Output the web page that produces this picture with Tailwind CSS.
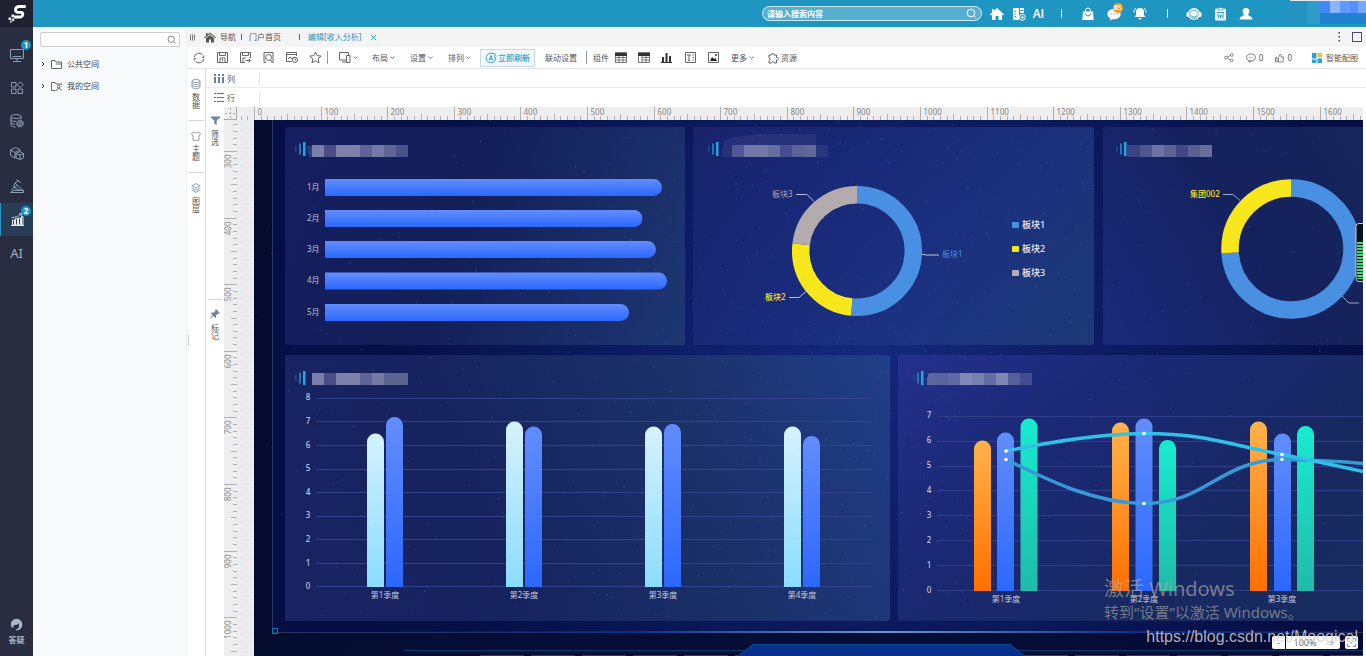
<!DOCTYPE html>
<html lang="zh-CN">
<head>
<meta charset="utf-8">
<meta name="viewport" content="width=device-width, initial-scale=1">
<title>编辑[收入分析]</title>
<script src="https://cdn.jsdelivr.net/npm/@tailwindcss/browser@4"></script>
</head>
<body class="flex h-screen overflow-hidden bg-white font-['Noto_Sans','Noto_Sans_CJK_SC',sans-serif] text-[8px] leading-3 text-[#555]">

<!-- Icon rail -->
<nav class="flex w-[33px] shrink-0 flex-col bg-[#282d40] text-[#8b9db3]" aria-label="主导航">
  <a href="#" class="flex h-[27px] items-center justify-center bg-[#1f2130]" aria-label="首页">
    <svg class="h-[20px] w-[20px]" viewBox="0 0 20 20" fill="none"><path d="M18.700 2.500H12.500C9.800 2.500 8.800 3.600 8.500 5.300 8.200 7.200 9.300 8.300 11.200 8.300H14C15.600 8.300 16 9.300 15.700 10.700 15.400 12.200 14.500 13 12.800 13H7" stroke="#fff" stroke-width="2.800"/><path d="M4.500 10.500h2.700v2.700H4.500zM1.500 13.500h2.500V16H1.500zM4.800 14.500h2.400v2.400H4.800zM3 16.800h1.700v1.700H3z" fill="#e8ebf0"/></svg>
  </a>
  <div class="flex flex-1 flex-col pt-[11px]">
    <button class="relative flex h-[33px] items-center justify-center" aria-label="桌面">
      <svg class="h-[16px] w-[16px]" viewBox="0 0 16 16" fill="none" stroke="currentColor"><path d="M1.500 2.500h13v9h-13zM4 14.500h8M8 11.500v3M3.500 9.500h9"/></svg>
      <span class="absolute top-[2px] right-[2px] flex h-[10px] w-[10px] items-center justify-center rounded-full bg-[#1f95c3] font-bold text-white">1</span>
    </button>
    <button class="flex h-[33px] items-center justify-center" aria-label="应用">
      <svg class="h-[14px] w-[14px]" viewBox="0 0 14 14" fill="none" stroke="currentColor"><path d="M1.500 1.500h4.500v4.500h-4.500zM1.500 8h4.500v4.500h-4.500zM8 8h4.500v4.500H8zM10.300.8l3 3-3 3-3-3z"/></svg>
    </button>
    <button class="flex h-[33px] items-center justify-center" aria-label="数据">
      <svg class="h-[16px] w-[16px]" viewBox="0 0 16 16" fill="none" stroke="currentColor"><ellipse cx="7" cy="3.500" rx="5" ry="2"/><path d="M2 3.500v8.500c0 1 2 2 4.500 2M12 3.500V6M2 6.500c0 1 2 2 5 2M2 9.500c0 1 2 1.800 4 1.800"/><circle cx="11" cy="10.500" r="3.500" stroke-dasharray="1.800 .9"/><circle cx="11" cy="10.500" r="2.600"/><circle cx="11" cy="10.500" r="1"/></svg>
    </button>
    <button class="flex h-[33px] items-center justify-center" aria-label="模型">
      <svg class="h-[15px] w-[16px]" viewBox="0 0 16 15" fill="none" stroke="currentColor"><path d="M6.500 1.500l4.500 2v2M6.500 1.500l-5 2.500v5.500l4.500 2.500M1.500 4l4.500 2.500L11 3.500M6 6.500v6M11 5.500l3.500 2v4.500L11 13.500l-4-1.500V7.500zM7 7.500l4 1.500 3.500-1.500M11 9v4.500"/></svg>
    </button>
    <button class="flex h-[33px] items-center justify-center" aria-label="挖掘">
      <svg class="h-[15px] w-[16px]" viewBox="0 0 16 15" fill="none" stroke="currentColor"><path d="M1.500 13.500h13v-2H4.500zM2.500 11.500l2-3 6 2.500 4 .5M4.500 8.500l4-2 5 4M8.500 6.500L6 4l3.500-2.500L12 4M6 4l-1.500 4M9.500 1.500L7.500 1"/></svg>
    </button>
    <button class="relative flex h-[33px] items-center justify-center border-l border-[#1f95c3] bg-[#293c55] text-[#e6ebf2]" aria-label="分析" aria-current="page">
      <svg class="h-[15px] w-[15px]" viewBox="0 0 15 15" fill="none" stroke="currentColor"><path d="M1 13.500h13"/><path d="M2.500 8h2v5h-2zM5.500 6.500h2V13h-2zM8.500 6h2v7h-2zM11.500 4.500h1.500V13h-1.500z"/><path d="M1.500 5.500c4 0 7-1 9.500-3.500M9 1.500h2.500V4" stroke="#b4c0cf"/></svg>
      <span class="absolute top-[3px] right-[2px] flex h-[10px] w-[10px] items-center justify-center rounded-full bg-[#1f95c3] font-bold text-white">2</span>
    </button>
    <button class="flex h-[33px] items-center justify-center text-[13px] leading-4 text-[#a5b3c4]">AI</button>
  </div>
  <button class="flex flex-col items-center gap-[3px] pb-[10px]">
    <svg class="h-[13px] w-[13px]" viewBox="0 0 13 13"><path d="M6.500.8A5.600 5.600 0 0 0 .8 6.500C.8 8.500 1.500 9.700 3.500 9.900 3.300 8.800 3.400 7.800 4 7c1.500.3 3.500-.2 4.500-1.800.5 1.500.7 2.800.2 4.300-.5 1.200-1.700 1.600-2.700 1.600v1.200c3 .2 4.600-1 5.200-2.600.8-.4 1.200-1.500 1.200-3.200A5.800 5.800 0 0 0 6.500.8z" fill="#a9b6c6"/></svg>
    <span class="font-bold text-[#a9b6c6]">答疑</span>
  </button>
</nav>

<div class="flex min-w-0 flex-1 flex-col">
  <!-- Top bar -->
  <header class="flex h-[27px] shrink-0 items-center justify-end bg-[#1f95c1] text-white">
    <label class="mr-1 flex h-[15px] w-[220px] items-center rounded-full border border-white/70 bg-white/25 px-1">
      <input type="text" placeholder="请输入搜索内容" aria-label="搜索" class="min-w-0 flex-1 bg-transparent font-bold outline-none placeholder:text-white">
      <svg class="h-[11px] w-[11px]" viewBox="0 0 11 11" fill="none" stroke="#fff"><circle cx="5" cy="5" r="3.800"/><path d="M8 8l2 2"/></svg>
    </label>
    <button class="flex w-[22px] justify-center" aria-label="主页"><svg class="h-[14px] w-[14px]" viewBox="0 0 14 14" fill="#fff"><path d="M7 1l7 6.500-1 1L12 7.600V13H8.500V9h-3v4H2V7.600l-1 .9-1-1L2 5.600V2h2v1.800z"/></svg></button>
    <button class="flex w-[22px] justify-center" aria-label="新建"><svg class="h-[14px] w-[14px]" viewBox="0 0 14 14"><path d="M1 1h6v12H1zM8 1h4v5H8z" fill="#fff"/><path d="M2.500 4.500h1.500M2.500 7h1.500M2.500 9.500h1.500M8.500 3.500h3" stroke="#1f95c1"/><circle cx="10.300" cy="10.300" r="3" fill="#1f95c1" stroke="#fff"/><path d="M10.300 8.800v3M8.800 10.300h3" stroke="#fff"/></svg></button>
    <button class="w-[17px] text-center font-['Open_Sans','Noto_Sans',sans-serif] text-[12px] leading-4 font-semibold">AI</button>
    <span class="flex w-[28px] justify-center"><span class="h-[9px] w-px bg-white"></span></span>
    <button class="flex w-[26px] justify-center" aria-label="资源包"><svg class="h-[14px] w-[12px]" viewBox="0 0 12 14"><path d="M1 4.500h10l.7 8.500H.3z" fill="#fff"/><path d="M3.500 5V3.500a2.500 2.500 0 0 1 5 0V5" fill="none" stroke="#fff"/><path d="M3.500 6.500a2.500 2.500 0 0 0 5 0" fill="none" stroke="#1f95c1"/></svg></button>
    <button class="relative flex w-[26px] justify-center" aria-label="消息"><svg class="h-[14px] w-[14px]" viewBox="0 0 14 14"><ellipse cx="7" cy="7" rx="6.700" ry="5.200" fill="#fff"/><path d="M3 10v3.500l4-2z" fill="#fff"/><path d="M3.500 7h1M6.500 7h1M9.500 7h1" stroke="#1f95c1"/></svg><span class="absolute -top-[4px] left-[12px] flex h-[10px] w-[10px] items-center justify-center rounded-full bg-[#f59a0c] text-[7px] font-bold">65</span></button>
    <button class="flex w-[26px] justify-center" aria-label="提醒"><svg class="h-[13px] w-[14px]" viewBox="0 0 14 13"><path d="M7 1a4 4 0 0 1 4 4v3l1.500 2h-11L3 8V5a4 4 0 0 1 4-4zM5.500 11h3a1.500 1.500 0 0 1-3 0z" fill="#fff"/><path d="M1 5.500C1 3.500 1.500 2.300 3 1.200M13 5.500c0-2-.5-3.200-2-4.300" fill="none" stroke="#fff"/></svg></button>
    <span class="flex w-[28px] justify-center"><span class="h-[9px] w-px bg-white"></span></span>
    <button class="flex w-[26px] justify-center" aria-label="客服"><svg class="h-[14px] w-[16px]" viewBox="0 0 16 14"><circle cx="8" cy="7" r="6" fill="#fff"/><rect x="0.500" y="5" width="3" height="5" rx="1.500" fill="#fff"/><rect x="12.500" y="5" width="3" height="5" rx="1.500" fill="#fff"/><circle cx="8" cy="7.300" r="4.200" fill="none" stroke="#1f95c1" stroke-width=".8"/><path d="M5.500 8.500a2.700 2.700 0 0 0 5 0" fill="none" stroke="#1f95c1"/></svg></button>
    <button class="flex w-[26px] justify-center" aria-label="任务"><svg class="h-[14px] w-[13px]" viewBox="0 0 13 14"><rect x="1" y="1.500" width="11" height="12" rx="1.500" fill="#fff"/><rect x="4" y="0.500" width="5" height="2.500" fill="#fff" stroke="#1f95c1" stroke-width=".7"/><path d="M3 5.500h7M4 7v4.500M6.500 7.500v4M9 6v5.500M4 9h5" stroke="#1f95c1" stroke-width=".9"/></svg></button>
    <button class="flex w-[26px] justify-center" aria-label="用户"><svg class="h-[14px] w-[14px]" viewBox="0 0 14 14" fill="#fff"><path d="M7 1a3.300 3.300 0 0 1 3.300 3.500c0 1.500-.6 2.700-1.500 3.300.2 1 4.500 1.200 4.700 4.700H.5c.2-3.500 4.500-3.700 4.700-4.700C4.300 7.200 3.700 6 3.700 4.500A3.300 3.300 0 0 1 7 1z"/></svg></button>
    <svg class="h-[27px] w-[107px] shrink-0" viewBox="0 0 107 27" shape-rendering="crispEdges"><path d="M26 1h22v23H34c-8-3-8-18-8-23z" fill="#2493c1"/><path d="M48 1h13v23H48z" fill="#2f9bc8"/><path d="M61 1h46v23H61z" fill="#2182d2"/><path d="M31 0h76v1H31z" fill="#e3e9ef"/><path d="M61 1h10v12H61z" fill="#4488ff"/><path d="M71 1h10v12H71z" fill="#8ab4ff"/><path d="M81 1h10v12H81z" fill="#6199ff"/><path d="M91 1h16v12H91z" fill="#5590ff"/><path d="M99 1h8v12h-8z" fill="#78a8fb"/></svg>
  </header>

  <div class="flex min-h-0 flex-1">
    <!-- Resource tree -->
    <aside class="w-[154px] shrink-0 border-r border-[#eceef1] bg-[#f8fafc] px-[7px] pt-[5px] text-[#444]">
      <label class="flex h-[15px] w-[140px] items-center rounded-xs border border-[#cfcfcf] bg-white px-[3px]">
        <input type="text" aria-label="查找资源" class="min-w-0 flex-1 outline-none">
        <svg class="h-[9px] w-[9px]" viewBox="0 0 9 9" fill="none" stroke="#777" stroke-width=".9"><circle cx="4.200" cy="4.200" r="3.200"/><path d="M6.500 6.500l2 2"/></svg>
      </label>
      <ul class="mt-[6px]">
        <li><button class="flex h-[22px] items-center gap-[5px]"><svg class="h-[6px] w-[6px]" viewBox="0 0 6 6" fill="none" stroke="#333"><path d="M2 1l2 2-2 2"/></svg><svg class="h-[9px] w-[11px]" viewBox="0 0 11 9" fill="none" stroke="#555" stroke-width=".9"><path d="M.5 8.500v-8h3.500l1 1.500h5.500v6.500zM5 4h5"/></svg><span>公共空间</span></button></li>
        <li><button class="flex h-[22px] items-center gap-[5px]"><svg class="h-[6px] w-[6px]" viewBox="0 0 6 6" fill="none" stroke="#333"><path d="M2 1l2 2-2 2"/></svg><svg class="h-[9px] w-[11px]" viewBox="0 0 11 9" fill="none" stroke="#555" stroke-width=".9"><path d="M4.500 8.500h-4v-8h3.500l1 1.500h5.500v1"/><circle cx="7.800" cy="4.700" r="1.400"/><path d="M5.500 8.700c.2-3 4.300-3 4.700 0"/></svg><span>我的空间</span></button></li>
      </ul>
    </aside>

    <main class="flex min-w-0 flex-1 flex-col">
      <!-- Open tabs -->
      <div class="flex h-5 shrink-0 items-center bg-[#f4f4f4] pr-1 pl-[3px]">
        <svg class="h-[7px] w-[6px]" viewBox="0 0 6 7" stroke="#777"><path d="M.5.500v6M2.500.500v6M4.500.500v6"/></svg>
        <a href="#" class="ml-2 flex items-center gap-1"><svg class="h-[11px] w-[12px]" viewBox="0 0 12 11" fill="#555"><path d="M6 .5l6 5-.7.8L6 2 .7 6.300 0 5.500 2 3.800V1h1.500v1.600zM6 3l4 3.300V10.500H7V7.500H5v3H2V6.300z"/></svg><span>导航</span></a>
        <span class="ml-[5px] h-[6px] w-px bg-[#666]"></span>
        <a href="#" class="ml-[7px]">门户首页</a>
        <span class="ml-[18px] h-[6px] w-px bg-[#666]"></span>
        <a href="#" class="ml-[8px] text-[#2d8fbd]" aria-current="page">编辑[收入分析]</a>
        <button class="ml-[9px]" aria-label="关闭"><svg class="h-[7px] w-[7px]" viewBox="0 0 7 7" stroke="#3c9cc9"><path d="M1 1l5 5M6 1L1 6"/></svg></button>
        <button class="ml-auto" aria-label="更多"><svg class="h-[10px] w-[4px]" viewBox="0 0 4 10" fill="#444"><path d="M1.500 0h1.500v1.500h-1.500zM1.500 4h1.500v1.500h-1.500zM1.500 8h1.500v1.500h-1.500z"/></svg></button>
        <button class="ml-[11px] h-[10px] w-[10px] border border-[#4a4a70]" aria-label="最大化"></button>
      </div>

      <!-- Toolbar -->
      <div class="flex h-[22px] shrink-0 items-center border-b border-[#e4e4e6] pr-2">
        <button class="flex w-[23px] justify-center" aria-label="刷新"><svg class="h-[12px] w-[12px]" viewBox="0 0 12 12" fill="none" stroke="#666"><path d="M1.200 5A4.900 4.900 0 0 1 9.500 2.600M10.800 7A4.900 4.900 0 0 1 2.500 9.400M10.800 3.500v2H9M1.200 8.500v-2H3"/></svg></button>
        <button class="flex w-[24px] justify-center" aria-label="保存"><svg class="h-[11px] w-[11px]" viewBox="0 0 11 11" fill="none" stroke="#666"><path d="M.5.500h10v10H.500zM2.500.500v3h6v-3M3 10.500V6h5v4.500M5.500 7v2"/></svg></button>
        <button class="flex w-[23px] justify-center" aria-label="另存"><svg class="h-[11px] w-[11px]" viewBox="0 0 11 11" fill="none" stroke="#666"><path d="M5 10.500H.5V.5h10V6M2.500.500v3h6v-3M3 10V6h3M5.500 8.500h5M8.500 6.500l2 2-2 2"/></svg></button>
        <button class="flex w-[23px] justify-center" aria-label="预览"><svg class="h-[11px] w-[11px]" viewBox="0 0 11 11" fill="none" stroke="#666"><path d="M3 10.500H1V.5h9v10H8.500"/><circle cx="5.500" cy="5.500" r="3"/><path d="M7.500 8l2 2.500"/></svg></button>
        <button class="flex w-[24px] justify-center" aria-label="定时"><svg class="h-[11px] w-[12px]" viewBox="0 0 12 11" fill="none" stroke="#666"><path d="M6 9.500H.5v-9h10V4M.5 2.500h10M2 7l2-2 2 2 1.500-2"/><circle cx="9" cy="7.800" r="2.600"/><path d="M9 6.500V8h1.200"/></svg></button>
        <button class="flex w-[23px] justify-center" aria-label="收藏"><svg class="h-[13px] w-[13px]" viewBox="0 0 13 13" fill="none" stroke="#666"><path d="M6.500 1l1.700 3.600 4 .5-3 2.700.8 4-3.500-2-3.500 2 .8-4-3-2.700 4-.5z"/></svg></button>
        <span class="h-[13px] w-px bg-[#999]"></span>
        <button class="ml-[11px] flex items-center gap-[2px]" aria-label="设备"><svg class="h-[11px] w-[12px]" viewBox="0 0 12 11" fill="none" stroke="#666"><path d="M7 8H.5V.5h9V3M3 10h4M7.500 3.500h3.500v7H7.500z"/></svg><svg class="h-[5px] w-[5px]" viewBox="0 0 5 5" fill="none" stroke="#777" stroke-width=".9"><path d="M.5 1.500l2 2 2-2"/></svg></button>
        <button class="ml-[14px] flex items-center gap-[2px]">布局<svg class="h-[5px] w-[5px]" viewBox="0 0 5 5" fill="none" stroke="#777" stroke-width=".9"><path d="M.5 1.500l2 2 2-2"/></svg></button>
        <button class="ml-[15px] flex items-center gap-[2px]">设置<svg class="h-[5px] w-[5px]" viewBox="0 0 5 5" fill="none" stroke="#777" stroke-width=".9"><path d="M.5 1.500l2 2 2-2"/></svg></button>
        <button class="ml-[15px] flex items-center gap-[2px]">排列<svg class="h-[5px] w-[5px]" viewBox="0 0 5 5" fill="none" stroke="#777" stroke-width=".9"><path d="M.5 1.500l2 2 2-2"/></svg></button>
        <button class="ml-[9px] flex h-[18px] w-[55px] items-center justify-center gap-px border border-[#c9d6ec] bg-[#f2f7fc] font-medium text-[#2ba3cf]"><svg class="h-[12px] w-[12px]" viewBox="0 0 12 12" fill="none" stroke="currentColor"><path d="M8.500 1.800A4.800 4.800 0 1 0 10.700 5M8 1l2.500 1.500L9 5M4 8.500l2-5 2 5M4.700 7h2.600"/></svg>立即刷新</button>
        <button class="ml-[10px]">联动设置</button>
        <span class="ml-[9px] h-[13px] w-px bg-[#999]"></span>
        <span class="ml-[6px]">组件</span>
        <button class="flex w-[23px] justify-center" aria-label="表格"><svg class="h-[11px] w-[12px]" viewBox="0 0 12 11" fill="none" stroke="#777"><path d="M.5 1h11v9.500H.5zM.5 5.500h11M.5 8h11M4 3v7.500M8 3v7.500"/><path d="M0 .5h12v3.500H0z" fill="#333" stroke="none"/></svg></button>
        <button class="flex w-[23px] justify-center" aria-label="交叉表"><svg class="h-[11px] w-[12px]" viewBox="0 0 12 11" fill="none" stroke="#777"><path d="M.5 1h11v9.500H.5zM4 5.500h7.500M4 8h7.500M4 3v7.500M8 3v7.500"/><path d="M0 .5h12v3.500H0z" fill="#333" stroke="none"/></svg></button>
        <button class="flex w-[23px] justify-center" aria-label="图表"><svg class="h-[10px] w-[11px]" viewBox="0 0 11 10" fill="#333"><path d="M1 4h2v5H1zM4.500 0h2v9h-2zM8 3h2v6H8zM0 9h11v1H0z"/></svg></button>
        <button class="flex w-[24px] justify-center" aria-label="文本"><svg class="h-[11px] w-[11px]" viewBox="0 0 11 11" fill="none" stroke="#666"><path d="M.5.500h10v10H.500zM2 3h4M4 3v5.500M3 8.500h2M7.500 3h1.500M7.500 5.500h1.500M7.500 8h1.500"/></svg></button>
        <button class="flex w-[23px] justify-center" aria-label="图片"><svg class="h-[11px] w-[11px]" viewBox="0 0 11 11" fill="none" stroke="#666"><path d="M.5.500h10v10H.500z"/><path d="M2 9l2-4 2 2 1.500-1L9 9z" fill="#222" stroke="none"/><circle cx="8" cy="3" r="1" fill="#333" stroke="none"/></svg></button>
        <button class="ml-[6px] flex items-center gap-[2px]">更多<svg class="h-[5px] w-[5px]" viewBox="0 0 5 5" fill="none" stroke="#777" stroke-width=".9"><path d="M.5 1.500l2 2 2-2"/></svg></button>
        <button class="ml-[14px] flex items-center gap-px"><svg class="h-[12px] w-[12px]" viewBox="0 0 12 12" fill="none" stroke="#666"><path d="M1 3h2.500C3 1 6.500 1 6 3h2.500v2.500c2.500-.5 2.500 3 0 2.500v3H6c0-2-2.500-2-2.500 0H1V8.500c1.500 0 1.500-2.500 0-2.500z"/></svg>资源</button>
        <button class="ml-auto" aria-label="分享"><svg class="h-[11px] w-[10px]" viewBox="0 0 10 11" fill="none" stroke="#777" stroke-width=".9"><circle cx="2" cy="5.500" r="1.400"/><circle cx="7.800" cy="3" r="1.400"/><circle cx="7.500" cy="8.500" r="1.400"/><path d="M3.300 5l3.200-1.500M3.300 6l3 1.800"/></svg></button>
        <button class="ml-[12px] flex items-center gap-[3px]" aria-label="评论"><svg class="h-[10px] w-[10px]" viewBox="0 0 10 10" fill="none" stroke="#777" stroke-width=".9"><ellipse cx="5" cy="4.500" rx="4.400" ry="3.500"/><path d="M3 7.500v2l2-1.500M2.800 4.500h.8M4.600 4.500h.8M6.400 4.500h.8"/></svg>0</button>
        <button class="ml-[12px] flex items-center gap-[3px]" aria-label="点赞"><svg class="h-[10px] w-[9px]" viewBox="0 0 9 10" fill="none" stroke="#777" stroke-width=".9"><path d="M.5 4.500h1.500v4.500H.500zM3.500 9V4.500L5 1.500c1-.5 1.500.5 1 2.500h2.500L8 9z"/></svg>0</button>
        <button class="ml-[20px] flex items-center gap-1"><svg class="h-[10px] w-[10px]" viewBox="0 0 10 10"><path d="M0 0h4.500v5.500H0zM0 6.500h4.500V10H0zM5.500 5.500H10V10H5.500z" fill="#2aa4d2"/><path d="M5.500 0H10v4.500H5.500z" fill="#f5bd33"/></svg>智能配图</button>
      </div>

      <div class="flex min-h-0 flex-1">
        <!-- Vertical panel tabs -->
        <div class="flex w-[19px] shrink-0 flex-col items-center border-r border-[#dcdde2]">
          <button class="flex h-[51px] flex-col items-center pt-[10px]"><svg class="h-[10px] w-[10px]" viewBox="0 0 10 10" fill="none" stroke="#8594a8" stroke-width=".9"><ellipse cx="5" cy="2" rx="4" ry="1.500"/><path d="M1 2v6c0 2 8 2 8 0V2M1 4c0 2 8 2 8 0M1 6c0 2 8 2 8 0"/></svg><span class="mt-[4px] w-2 leading-[8px]">数据</span></button>
          <span class="h-px w-[15px] bg-[#cfd3da]"></span>
          <button class="flex h-[51px] flex-col items-center pt-[10px]"><svg class="h-[10px] w-[10px]" viewBox="0 0 10 10" fill="none" stroke="#8594a8" stroke-width=".9"><path d="M3.200.8c.5 1.500 3 1.500 3.600 0L9.500 2.500l-1 2H8v4.800H2V4.500h-.5l-1-2z"/></svg><span class="mt-[4px] w-2 leading-[8px]">主题</span></button>
          <span class="h-px w-[15px] bg-[#cfd3da]"></span>
          <button class="flex h-[51px] flex-col items-center pt-[10px]"><svg class="h-[10px] w-[10px]" viewBox="0 0 10 10" fill="none" stroke="#8594a8" stroke-width=".9"><path d="M5 .6l4.300 2.200L5 5 .7 2.800zM.7 5L5 7.200 9.300 5M.7 7L5 9.300 9.300 7"/></svg><span class="mt-[4px] w-2 leading-[8px]">图层</span></button>
          <span class="mt-[111px] ml-px h-[11px] w-px self-start bg-[#ccc]"></span>
        </div>

        <div class="flex min-w-0 flex-1 flex-col">
          <!-- Column and row shelves -->
          <div class="flex h-[19px] shrink-0 items-center border-b border-[#ececee] pt-px pl-2">
            <svg class="h-[9px] w-[10px]" viewBox="0 0 10 9" fill="#5f7089"><path d="M0 0h2v2H0zM4 0h2v2H4zM8 0h2v2H8zM0 3h2v6H0zM4 3h2v6H4zM8 3h2v6H8z" opacity=".9"/></svg>
            <span class="ml-[3px] w-[32px]">列</span><span class="h-[14px] w-px bg-[#e8e8e8]"></span>
          </div>
          <div class="flex h-[19px] shrink-0 items-center pl-2">
            <svg class="h-[9px] w-[10px]" viewBox="0 0 10 9" fill="#5f7089"><path d="M0 0h2v1H0zM0 4h2v1H0zM0 8h2v1H0zM3 0h7v1H3zM3 4h7v1H3zM3 8h7v1H3z"/></svg>
            <span class="ml-[3px] w-[32px]">行</span><span class="h-[14px] w-px bg-[#e8e8e8]"></span>
          </div>

          <div class="flex min-h-0 flex-1">
            <!-- Filters and marks -->
            <div class="flex w-[18px] shrink-0 flex-col items-center">
              <button class="flex h-[192px] flex-col items-center pt-[9px]"><svg class="h-[9px] w-[9px]" viewBox="0 0 9 9" fill="#74849b"><path d="M0 .5h9v1.300L5.700 4.500V9L3.300 7.800V4.500L0 1.800z"/></svg><span class="mt-[5px] w-2 leading-[8px]">筛选</span></button>
              <span class="h-px w-[14px] bg-[#cfd3da]"></span>
              <button class="flex flex-col items-center pt-[9px]"><svg class="h-[10px] w-[10px]" viewBox="0 0 10 10"><path d="M6 0l4 4-1 .8-.8-.3L6 6.500l.2 1.700-1 .8-2-2L.5 9.500 0 9l2.700-2.700-2-2 .8-.8 1.800.2L5.500 1.800 5.200.8z" fill="#74849b"/></svg><span class="mt-[5px] w-2 leading-[8px]">标记</span></button>
            </div>

            <div class="flex min-w-0 flex-1 flex-col pr-[3px]">
              <div class="flex h-[13px] shrink-0 bg-[#eeeeee]">
                <svg class="h-[13px] w-[13px] shrink-0" viewBox="0 0 13 13" fill="none" stroke="#aaa"><path d="M13 12.500H0M12.500 0v13"/><path d="M6.500 1v10M1 6.500h10" stroke-dasharray="2 2"/></svg>
                <svg id="ruler-x" class="h-[13px] min-w-0 flex-1" stroke="#b0b0b0" font-size="8"></svg>
              </div>
              <div class="flex min-h-0 flex-1">
                <svg id="ruler-y" class="h-full w-[13px] shrink-0 bg-[#eeeeee]" stroke="#b0b0b0" font-size="8"></svg>
                <div class="w-[17px] shrink-0 bg-[#ebecf0] bg-[radial-gradient(circle,#dfe1e8_1px,transparent_1px)] bg-[size:10px_7px]"></div>

                <!-- Dashboard stage -->
                <section class="relative min-w-0 flex-1 overflow-hidden bg-[linear-gradient(100deg,#040b2d,#050e36_30%,#050b34)]" aria-label="收入分析">
                  <div class="absolute top-0 right-0 left-[18px] h-[513px] border-b border-l border-[#26345f] bg-[radial-gradient(circle_at_55%_45%,#14297d,#0d1c62_35%,#050f45_75%)]"></div>
                  <div class="absolute top-[511px] left-[130px] h-[2px] w-[1000px] bg-[linear-gradient(90deg,transparent,#0b2f8c_25%,#6f96cc_50%,#0b2f8c_75%,transparent)]"></div>
                  <svg class="absolute top-[522px] left-0 h-[14px] w-[1240px]" viewBox="0 0 1240 14" fill="none"><path d="M150 8.500h340M765 8.500h345" stroke="#0c3c68"/><path d="M226 13.500h260M770 13.500h350" stroke="#0b4a7c" stroke-dasharray="44 7"/><path d="M484 14l15-11.500h257l15 11.500" fill="#07308c" stroke="#0e4f99"/></svg>
                  <svg class="stars absolute inset-0 h-full w-full opacity-30" fill="#5c86d6"></svg>
                  <span class="absolute top-[508px] left-[18px] h-[6px] w-[6px] border border-[#0777b8]"></span>

                  <div class="relative flex flex-col gap-[10px] pt-[7px] pl-[31px]">
                    <div class="flex gap-2">
                      <!-- Monthly bars -->
                      <article class="h-[218px] w-[400px] shrink-0 rounded-xs bg-[linear-gradient(110deg,#171f62f2,#15215bd9_45%,#1f3a74e6)]">
                        <svg class="h-full w-full" viewBox="285 127 400 218" font-size="8" fill="#b9c0da">
                          <defs>
                            <linearGradient id="blue" x2="0" y2="1"><stop stop-color="#628dfb"/><stop offset="1" stop-color="#2c68ff"/></linearGradient>
                            <linearGradient id="ice" x2="0" y2="1"><stop stop-color="#d6f2ff"/><stop offset="1" stop-color="#8adcfc"/></linearGradient>
                            <linearGradient id="orange" x2="0" y2="1"><stop stop-color="#ffb34a"/><stop offset="1" stop-color="#ff7000"/></linearGradient>
                            <linearGradient id="green" x2="0" y2="1"><stop stop-color="#18ebcf"/><stop offset="1" stop-color="#1fbca8"/></linearGradient>
                            <g id="mark"><path d="M0 5h1.500v6H0z" fill="#1d4b8a"/><path d="M4 2.500h2v11H4z" fill="#1f78b4"/><path d="M8 1h2.500v14H8z" fill="#28a3dd"/></g>
                          </defs>
                          <use href="#mark" x="295" y="141"/>
                          <g shape-rendering="crispEdges"><path d="M307 146h5v11h-3z" fill="#1f4480"/><path d="M312 145h12v12h-12z" fill="#7a7da8"/><path d="M324 145h12v12h-12z" fill="#494f85"/><path d="M336 145h24v12h-24z" fill="#7d80aa"/><path d="M360 145h12v12h-12z" fill="#5d6496"/><path d="M372 145h12v12h-12z" fill="#757aa5"/><path d="M384 145h12v12h-12z" fill="#5f6696"/><path d="M396 145h12v12h-12z" fill="#4b5288"/></g>
                          <g text-anchor="end"><text x="319.500" y="190">1月</text><text x="319.500" y="221">2月</text><text x="319.500" y="252">3月</text><text x="319.500" y="283">4月</text><text x="319.500" y="315">5月</text></g>
                          <g fill="url(#blue)"><path d="M325 179h328.500a8.500 8.500 0 0 1 0 17H325z"/><path d="M325 210h309a8.500 8.500 0 0 1 0 17H325z"/><path d="M325 241h322.500a8.500 8.500 0 0 1 0 17H325z"/><path d="M325 272.500h333.500a8.500 8.500 0 0 1 0 17H325z"/><path d="M325 304h295.500a8.500 8.500 0 0 1 0 17H325z"/></g>
                        </svg>
                      </article>
                      <!-- Sector donut -->
                      <article class="h-[218px] w-[401px] shrink-0 rounded-xs bg-[linear-gradient(125deg,#1b246ed9,#1a2c7ccc_35%,#1e3684cc_65%,#20407acc)]">
                        <svg class="h-full w-full" viewBox="693 127 401 218" font-size="8">
                          <use href="#mark" x="708" y="141"/>
                          <path d="M722 157c0-12 2-20 14-20l20-3h60v11h5v12z" fill="#26317a"/>
                          <g shape-rendering="crispEdges"><path d="M732 145h12v12h-12z" fill="#4f5894"/><path d="M744 145h24v12h-24z" fill="#7279a8"/><path d="M768 145h12v12h-12z" fill="#666e9f"/><path d="M780 145h12v12h-12z" fill="#454f8d"/><path d="M792 145h12v12h-12z" fill="#5a6399"/><path d="M804 145h12v12h-12z" fill="#5f689c"/><path d="M816 145h12v12h-12z" fill="#28367d"/></g>
                          <g fill="none" stroke-width="17.500" transform="rotate(-90 857 251)"><circle cx="857" cy="251" r="56.300" pathLength="360" stroke="#4a90e2" stroke-dasharray="185.500 360"/><circle cx="857" cy="251" r="56.300" pathLength="360" stroke="#f8e71c" stroke-dasharray="91.500 360" stroke-dashoffset="-185.500"/><circle cx="857" cy="251" r="56.300" pathLength="360" stroke="#b3abad" stroke-dasharray="83 360" stroke-dashoffset="-277"/></g>
                          <path d="M796 194.500h11l7 7M789 297.500h10l7-6M922 254.500l5 .5h12" fill="none" stroke="#b8c4e0"/>
                          <text x="772" y="197" fill="#b3abad">板块3</text><text x="765" y="300" fill="#f8e71c" font-weight="500">板块2</text><text x="942" y="257" fill="#4a90e2">板块1</text>
                          <g font-size="9" fill="#eef1fa" font-weight="500"><rect x="1012" y="222" width="7" height="6" rx="1" fill="#4a90e2"/><text x="1022" y="228">板块1</text><rect x="1012" y="246" width="7" height="6" rx="1" fill="#f8e71c"/><text x="1022" y="252">板块2</text><rect x="1012" y="270" width="7" height="6" rx="1" fill="#b3abad"/><text x="1022" y="276">板块3</text></g>
                        </svg>
                      </article>
                      <!-- Group donut -->
                      <article class="ml-px h-[218px] w-[400px] shrink-0 rounded-xs bg-[linear-gradient(60deg,#1c2c80d9,#17235fe6_40%,#182b5ce6)]">
                        <svg class="h-full w-full" viewBox="1103 127 400 218" font-size="8">
                          <use href="#mark" x="1116" y="141"/>
                          <g shape-rendering="crispEdges"><path d="M1127 145h13v12h-13z" fill="#3a4484"/><path d="M1140 145h12v12h-12z" fill="#4d5790"/><path d="M1152 145h12v12h-12z" fill="#6c73a5"/><path d="M1164 145h12v12h-12z" fill="#5c6495"/><path d="M1176 145h12v12h-12z" fill="#404986"/><path d="M1188 145h12v12h-12z" fill="#596191"/><path d="M1200 145h12v12h-12z" fill="#686f9b"/></g>
                          <g fill="none" stroke-width="17.500" transform="rotate(-90 1291 249)"><circle cx="1291" cy="249" r="61" pathLength="360" stroke="#4a90e2" stroke-dasharray="266.300 360"/><circle cx="1291" cy="249" r="61" pathLength="360" stroke="#f8e71c" stroke-dasharray="93.700 360" stroke-dashoffset="-266.300"/></g>
                          <path d="M1223 194.500h10l7 6M1342 296l7 7h10" fill="none" stroke="#9aa8c8"/>
                          <text x="1190" y="197" fill="#f8e71c" font-weight="500">集团002</text>
                          <rect x="1356" y="223.500" width="20" height="58" rx="3" fill="#06101f" stroke="#b9cbe8"/>
                          <path d="M1360 242v37" stroke="#3be06b" stroke-width="6" stroke-dasharray="2 1"/>
                        </svg>
                      </article>
                    </div>

                    <div class="flex gap-2">
                      <!-- Quarterly bars -->
                      <article class="h-[266px] w-[605px] shrink-0 rounded-xs bg-[linear-gradient(70deg,#1a2464f2,#182561e6_35%,#1c3268e6_65%,#224189d9)]">
                        <svg class="h-full w-full" viewBox="285 355 605 266" font-size="8" fill="#c3c9df" text-anchor="middle">
                          <use href="#mark" x="295" y="370"/>
                          <g shape-rendering="crispEdges"><path d="M312 373h12v12h-12z" fill="#7a7da8"/><path d="M324 373h12v12h-12z" fill="#494f85"/><path d="M336 373h24v12h-24z" fill="#7d80aa"/><path d="M360 373h12v12h-12z" fill="#5d6496"/><path d="M372 373h12v12h-12z" fill="#757aa5"/><path d="M384 373h24v12h-24z" fill="#5a628f"/></g>
                          <path d="M316 398.500h556M316 421.500h556M316 445.500h556M316 469.500h556M316 492.500h556M316 516.500h556M316 539.500h556M316 563.500h556M316 586.500h556" stroke="#33428c"/>
                          <g font-weight="500"><text x="308" y="400">8</text><text x="308" y="424">7</text><text x="308" y="448">6</text><text x="308" y="471">5</text><text x="308" y="495">4</text><text x="308" y="518">3</text><text x="308" y="542">2</text><text x="308" y="566">1</text><text x="308" y="589">0</text></g>
                          <g fill="url(#ice)"><path d="M367 587V442a8.500 8.500 0 0 1 17 0V587z"/><path d="M506 587V430a8.500 8.500 0 0 1 17 0V587z"/><path d="M645 587V435a8.500 8.500 0 0 1 17 0V587z"/><path d="M784 587V435a8.500 8.500 0 0 1 17 0V587z"/></g>
                          <g fill="url(#blue)"><path d="M386 587V425.500a8.500 8.500 0 0 1 17 0V587z"/><path d="M525 587V435a8.500 8.500 0 0 1 17 0V587z"/><path d="M664 587V432.500a8.500 8.500 0 0 1 17 0V587z"/><path d="M803 587V444.500a8.500 8.500 0 0 1 17 0V587z"/></g>
                          <text x="385" y="598">第1季度</text><text x="524" y="598">第2季度</text><text x="663" y="598">第3季度</text><text x="802" y="598">第4季度</text>
                        </svg>
                      </article>
                      <!-- Quarterly combination chart -->
                      <article class="h-[266px] w-[605px] shrink-0 rounded-xs bg-[linear-gradient(140deg,#26328ee6,#1c2a78e6_25%,#192b62e6_60%,#192f62)]">
                        <svg class="h-full w-full" viewBox="898 355 605 266" font-size="8" fill="#c3c9df" text-anchor="middle">
                          <use href="#mark" x="913" y="370"/>
                          <g shape-rendering="crispEdges"><path d="M929 373h7v12h-9v-6z" fill="#5c65a0"/><path d="M936 373h12v12h-12z" fill="#5a639f"/><path d="M948 373h12v12h-12z" fill="#6069a3"/><path d="M960 373h12v12h-12z" fill="#8289b8"/><path d="M972 373h12v12h-12z" fill="#7880b0"/><path d="M984 373h12v12h-12z" fill="#636ca3"/><path d="M996 373h12v12h-12z" fill="#8087b5"/><path d="M1008 373h12v12h-12z" fill="#555f9b"/><path d="M1020 373h12v12h-12z" fill="#434d8e"/></g>
                          <path d="M937 416.500h500M937 441.500h500M937 466.500h500M937 490.500h500M937 515.500h500M937 540.500h500M937 565.500h500M937 590.500h500" stroke="#303f88"/>
                          <g font-weight="500"><text x="929" y="418">7</text><text x="929" y="443">6</text><text x="929" y="468">5</text><text x="929" y="493">4</text><text x="929" y="518">3</text><text x="929" y="543">2</text><text x="929" y="568">1</text><text x="929" y="593">0</text></g>
                          <g fill="url(#orange)"><path d="M974 591V449a8.500 8.500 0 0 1 17 0V591z"/><path d="M1112 591V431a8.500 8.500 0 0 1 17 0V591z"/><path d="M1250 591V430a8.500 8.500 0 0 1 17 0V591z"/></g>
                          <g fill="url(#blue)"><path d="M997 591V441a8.500 8.500 0 0 1 17 0V591z"/><path d="M1135.500 591V427a8.500 8.500 0 0 1 17 0V591z"/><path d="M1274 591V442a8.500 8.500 0 0 1 17 0V591z"/></g>
                          <g fill="url(#green)"><path d="M1020.500 591V427a8.500 8.500 0 0 1 17 0V591z"/><path d="M1159 591V448.500a8.500 8.500 0 0 1 17 0V591z"/><path d="M1297 591V434.500a8.500 8.500 0 0 1 17 0V591z"/></g>
                          <g fill="none" stroke-width="3.500"><path d="M1006 459.500C1052 482 1095 503 1144 503.500C1206 504 1218 461 1282 459.500Q1325 460 1370 464" stroke="#3699d8"/><path d="M1006 451C1052 442 1098 434 1144 433.500C1206 434 1222 443 1282 454.500Q1325 463 1370 473" stroke="#30c0e8"/></g>
                          <g fill="#fff"><circle cx="1006" cy="451" r="1.800"/><circle cx="1006" cy="459.500" r="1.800"/><circle cx="1144" cy="433.500" r="1.800"/><circle cx="1144" cy="503.500" r="1.800"/><circle cx="1282" cy="454.500" r="1.800"/><circle cx="1282" cy="459.500" r="1.800"/></g>
                          <text x="1006" y="602">第1季度</text><text x="1144" y="602">第2季度</text><text x="1282" y="602">第3季度</text>
                        </svg>
                      </article>
                    </div>
                  </div>
                  <svg class="stars pointer-events-none absolute inset-0 h-full w-full opacity-25" fill="#6f9be0"></svg>

                  <!-- Zoom control and screen overlays -->
                  <div class="absolute right-[5px] bottom-[7px] flex h-[13px] text-[9px] text-[#666]">
                    <button class="w-[13px] rounded-l-xs bg-white" aria-label="缩小">-</button>
                    <div class="ml-px flex w-[54px] items-center rounded-r-xs bg-white"><span class="w-[38px] text-center">100%</span><button class="flex-1" aria-label="放大">+</button></div>
                    <button class="ml-[5px] flex w-[13px] items-center justify-center rounded-xs bg-white" aria-label="全屏"><svg class="h-[9px] w-[9px]" viewBox="0 0 9 9" fill="none" stroke="#888"><path d="M.5 3V.5H3M6 .5h2.500V3M8.500 6v2.500H6M3 8.500H.5V6M5.500 3.500L3.500 5.500"/></svg></button>
                  </div>
                  <div class="pointer-events-none absolute right-[62px] bottom-[32px] w-[197px] whitespace-nowrap text-[#a8a8a8]/65">
                    <p class="text-[20px] leading-[24px]">激活 Windows</p>
                    <p class="text-[15px] leading-[23px]">转到“设置”以激活 Windows。</p>
                  </div>
                  <p class="pointer-events-none absolute right-[5px] bottom-[9px] font-['Liberation_Sans',sans-serif] text-[16px] leading-5 text-[#d0d2d6]/85">https://blog.csdn.net/Moogical</p>
                </section>
              </div>
            </div>
          </div>
        </div>
      </div>
    </main>
  </div>
</div>

<script>
  // Rulers: one tick every 10 units, a label every 100.
  const STEP = 6.66;
  let h = '';
  for (let i = -2; i < 168; i++) {
    const x = Math.round(17 + i * STEP) + 0.5;
    const top = i % 10 === 0 ? 0 : i % 5 === 0 ? 7 : 9;
    h += `<path d="M${x} ${top}V13"/>`;
    if (i % 10 === 0) h += `<text x="${x + 3}" y="8" fill="#888" stroke="none">${i * 10}</text>`;
  }
  document.getElementById('ruler-x').innerHTML = h;
  let v = '';
  for (let i = 26; i < 107; i++) {
    const y = Math.round(31 + (i - 30) * STEP) + 0.5;
    const left = i % 10 === 0 ? 0 : i % 5 === 0 ? 7 : 9;
    v += `<path d="M${left} ${y}H13"/>`;
    if (i % 10 === 0) v += `<text transform="translate(7 ${y + 3}) rotate(-90)" text-anchor="end" fill="#888" stroke="none">${i * 10}</text>`;
  }
  document.getElementById('ruler-y').innerHTML = v;

  // Star field, denser towards the middle of the stage; one layer behind the cards, one faint layer above.
  let seed = 7;
  const rnd = () => (seed = (seed * 16807) % 2147483647) / 2147483647;
  for (const layer of document.querySelectorAll('.stars')) {
    let stars = '';
    for (let i = 0; i < 1100; i++) {
      const x = 560 + (rnd() + rnd() - 1) * 600, y = rnd() * 500;
      stars += `<circle cx="${x.toFixed(1)}" cy="${y.toFixed(1)}" r="${(0.4 + rnd() * 0.6).toFixed(2)}" opacity="${(0.2 + rnd() * 0.7).toFixed(2)}"/>`;
    }
    layer.innerHTML = stars;
  }
</script>
</body>
</html>
